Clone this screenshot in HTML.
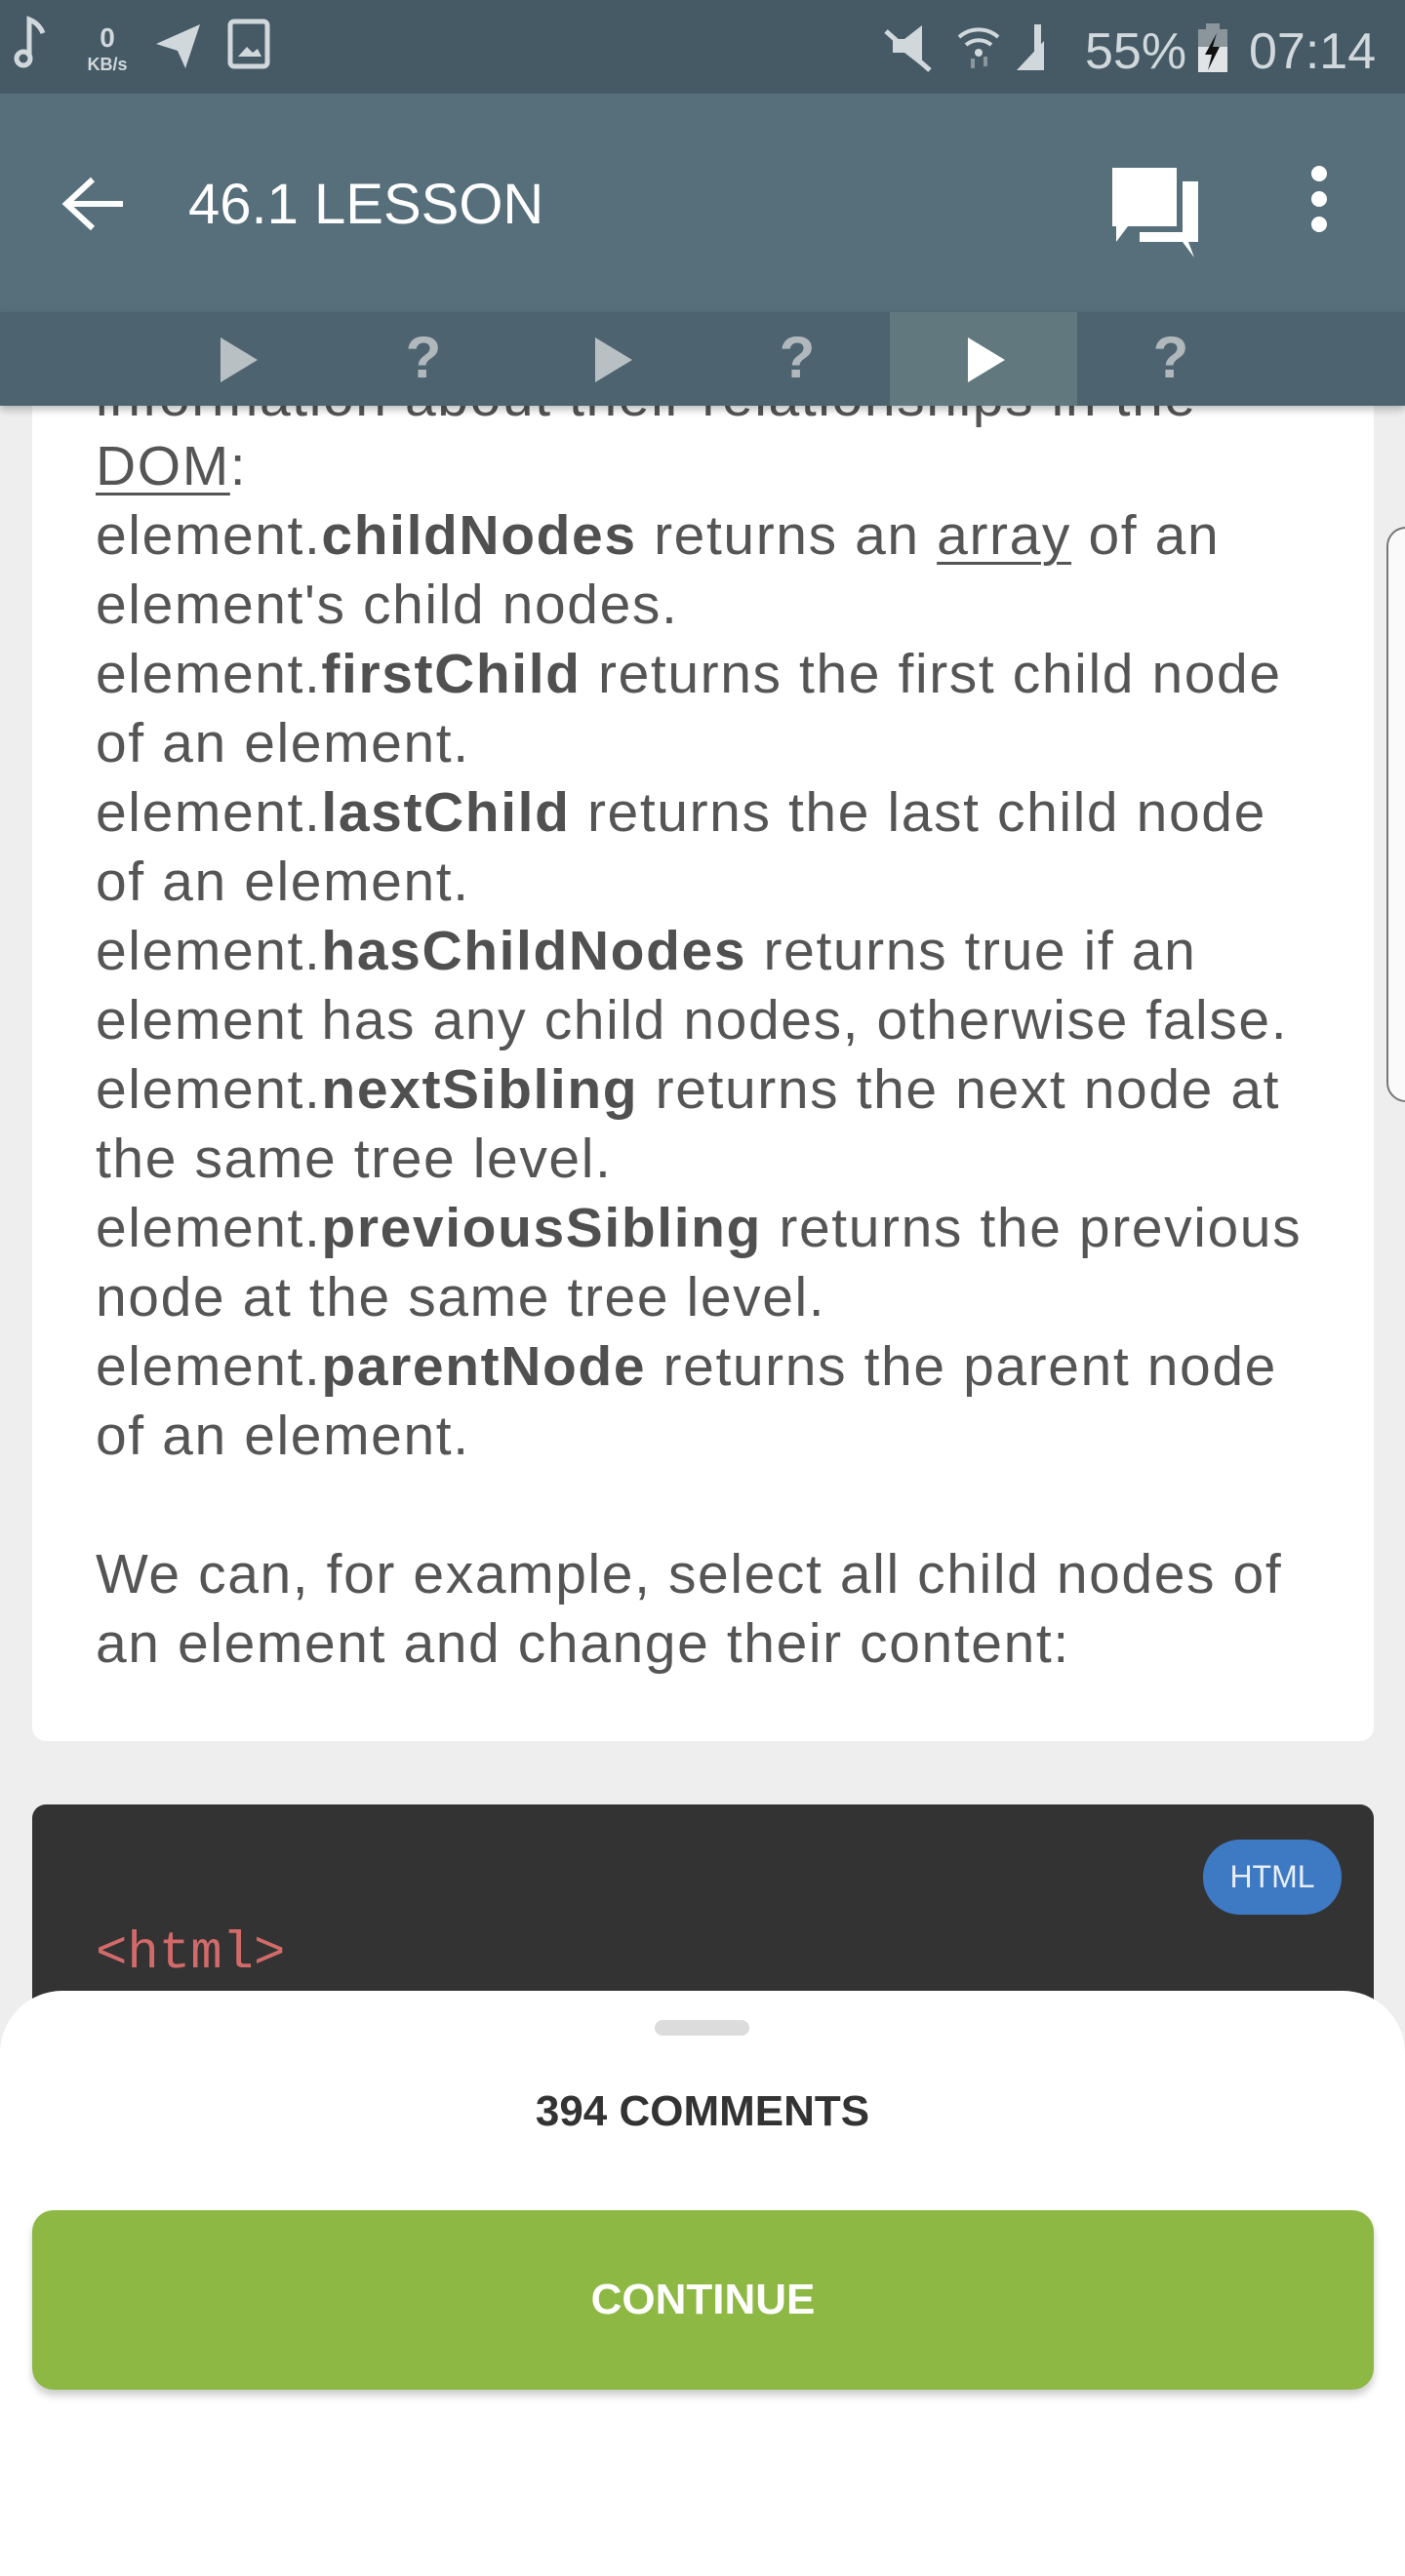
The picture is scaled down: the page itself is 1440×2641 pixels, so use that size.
<!DOCTYPE html>
<html><head><meta charset="utf-8"><style>
*{margin:0;padding:0;box-sizing:border-box}
body{width:1440px;height:2560px;overflow:hidden;background:#eeeeee;position:relative;font-family:"Liberation Sans",sans-serif}
.abs{position:absolute}
#status{left:0;top:0;width:1440px;height:96px;background:#465a66}
#tool{left:0;top:96px;width:1440px;height:224px;background:#566f7b}
#tabs{left:0;top:320px;width:1440px;height:96px;background:#4d6470;box-shadow:0 4px 8px rgba(0,0,0,.25)}
.tab{position:absolute;top:0;width:192px;height:96px}
.tri{position:absolute;left:80px;top:26px;width:0;height:0;border-left:38px solid #b8c0c4;border-top:23px solid transparent;border-bottom:23px solid transparent}
.q{position:absolute;left:0;width:192px;top:12px;text-align:center;font-size:60px;font-weight:bold;color:#b0b8bc}
#card{left:33px;top:300px;width:1375px;height:1485px;background:#fff;border-radius:0 0 14px 14px}
#text{left:98px;top:443px;font-size:57px;line-height:71px;color:#555;white-space:nowrap;letter-spacing:1.6px}
#text b{color:#505050}
#text u{text-decoration-thickness:3px;text-underline-offset:8px}
#code{left:33px;top:1850px;width:1375px;height:400px;background:#333;border-radius:14px}
#pill{left:1233px;top:1886px;width:142px;height:77px;border-radius:38px;background:#3e79c4;color:#e8eef8;font-size:32px;text-align:center;line-height:77px}
#tag{left:98px;top:1973px;font-family:"Liberation Mono",monospace;font-size:54px;color:#d36a6a}
#sheet{left:0;top:2041px;width:1440px;height:600px;background:#fff;border-radius:64px 64px 0 0}
#handle{left:671px;top:2071px;width:97px;height:16px;border-radius:8px;background:#dcdcdc}
#cm{left:0;top:2140px;width:1440px;text-align:center;font-size:44px;font-weight:bold;color:#333}
#btn{left:33px;top:2266px;width:1375px;height:184px;border-radius:22px;background:#8db843;box-shadow:0 6px 8px rgba(0,0,0,.2);color:#fff;text-align:center;line-height:184px;font-size:44px;font-weight:bold}
#edge{left:1421px;top:540px;width:40px;height:590px;border:2px solid #777;border-radius:20px;background:#fafafa}
</style></head><body>
<div id="edge" class="abs"></div>
<div id="card" class="abs"></div>
<div id="text" class="abs">
<div style="position:absolute;top:-71px;color:#555">information about their relationships in the</div>
<u>DOM</u>:<br>
element.<b>childNodes</b> returns an <u>array</u> of an<br>
element's child nodes.<br>
element.<b>firstChild</b> returns the first child node<br>
of an element.<br>
element.<b>lastChild</b> returns the last child node<br>
of an element.<br>
element.<b>hasChildNodes</b> returns true if an<br>
element has any child nodes, otherwise false.<br>
element.<b>nextSibling</b> returns the next node at<br>
the same tree level.<br>
element.<b>previousSibling</b> returns the previous<br>
node at the same tree level.<br>
element.<b>parentNode</b> returns the parent node<br>
of an element.<br>
<br>
We can, for example, select all child nodes of<br>
an element and change their content:
</div>
<div id="status" class="abs">
<svg width="1440" height="96" style="position:absolute;left:0;top:0">
<g fill="none" stroke="#d0d8dc" stroke-width="5"><path d="M30 58V20q10 4 14 14"/><circle cx="24" cy="60" r="7"/></g>
<text x="110" y="48" font-size="28" font-weight="bold" fill="#d0d8dc" text-anchor="middle" font-family="Liberation Sans">0</text>
<text x="110" y="72" font-size="18" font-weight="bold" fill="#d0d8dc" text-anchor="middle" font-family="Liberation Sans">KB/s</text>
<path d="M160 45L205 25L190 70L182 52Z" fill="#d0d8dc"/>
<rect x="236" y="22" width="38" height="46" rx="4" fill="none" stroke="#d0d8dc" stroke-width="5"/><path d="M244 58l9-10 6 6 5-4 4 8z" fill="#d0d8dc"/>
<path d="M915 40h12l18-14v42l-18-14h-12z" fill="#d0d8dc"/><path d="M908 32l45 40" stroke="#d0d8dc" stroke-width="5"/>
<g fill="none" stroke="#d0d8dc" stroke-width="4"><path d="M983 38a30 30 0 0 1 40 0"/><path d="M990 46a20 20 0 0 1 26 0"/></g><circle cx="1003" cy="54" r="4" fill="#d0d8dc"/>
<path d="M997 60v10M1010 58v10" stroke="#8a969c" stroke-width="4"/>
<path d="M1042 72l28-30v30z" fill="#d0d8dc"/><rect x="1060" y="25" width="7" height="47" fill="#d0d8dc"/>
<text x="1112" y="70" font-size="52" fill="#d0d8dc" font-family="Liberation Sans">55%</text>
<rect x="1228" y="30" width="30" height="44" fill="#e0e4e6"/><rect x="1228" y="30" width="30" height="18" fill="#8a969c"/><rect x="1236" y="24" width="14" height="6" fill="#8a969c"/><path d="M1247 34l-12 22h7l-4 16 12-24h-7z" fill="#111"/>
<text x="1280" y="70" font-size="52" fill="#d0d8dc" font-family="Liberation Sans">07:14</text>
</svg></div>
<div id="tool" class="abs">
<svg width="1440" height="224" style="position:absolute;left:0;top:0">
<path d="M126 113H72M95 88L68 113l27 25" fill="none" stroke="#fff" stroke-width="6"/>
<text x="193" y="133" font-size="58" fill="#fff" font-family="Liberation Sans">46.1 LESSON</text>
<path d="M1140 76h66v60h-50l-12 16v-16h-4z" fill="#fff"/>
<path d="M1212 90h16v62h-10l6 16-12-16h-44v-10h44z" fill="#fff"/>
<circle cx="1352" cy="82" r="8" fill="#fff"/><circle cx="1352" cy="108" r="8" fill="#fff"/><circle cx="1352" cy="134" r="8" fill="#fff"/>
</svg></div>
<div id="tabs" class="abs">
<div class="tab" style="left:146px"><div class="tri"></div></div>
<div class="tab" style="left:338px"><div class="q">?</div></div>
<div class="tab" style="left:530px"><div class="tri"></div></div>
<div class="tab" style="left:721px"><div class="q">?</div></div>
<div class="tab" style="left:912px;background:#62787f"><div class="tri" style="border-left-color:#fff"></div></div>
<div class="tab" style="left:1104px"><div class="q">?</div></div>
</div>
<div id="code" class="abs"></div>
<div id="pill" class="abs">HTML</div>
<div id="tag" class="abs">&lt;html&gt;</div>
<div id="sheet" class="abs"></div>
<div id="handle" class="abs"></div>
<div id="cm" class="abs">394 COMMENTS</div>
<div id="btn" class="abs">CONTINUE</div>
</body></html>
